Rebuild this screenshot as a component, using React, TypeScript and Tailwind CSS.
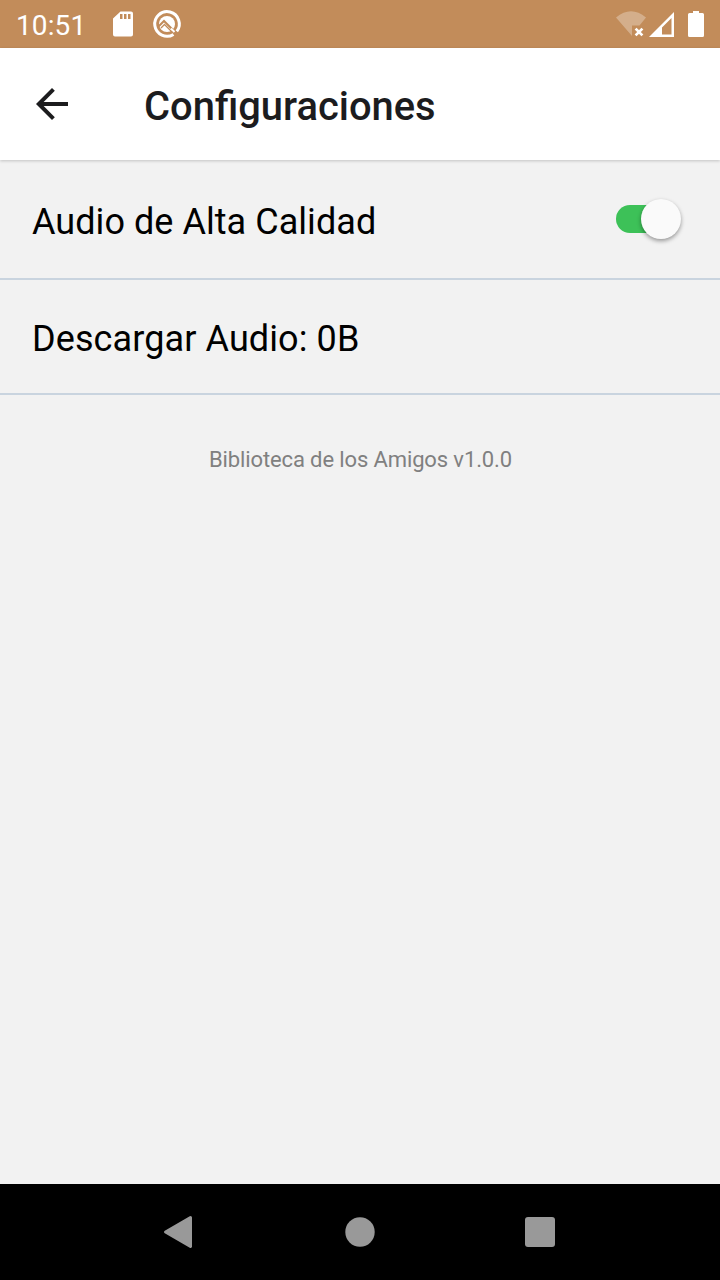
import { useState } from "react";

function StatusBar() {
  return (
    <header className="flex h-12 shrink-0 items-center bg-[#c28c5a] text-white">
      <span className="ml-4 w-[96px] pt-[3px] text-[28px] leading-[46px] tracking-[0.1px]">10:51</span>
      <svg className="h-12 w-6" viewBox="0 0 24 48" fill="#fff">
        <path fillRule="evenodd" d="M8.500 11.500H19a2 2 0 0 1 2 2v21a2 2 0 0 1-2 2H3a2 2 0 0 1-2-2V18.500zM8 14v5h2.500v-5zM12 14v5h2.500v-5zM16 14v5h2.500v-5z" />
      </svg>
      <svg className="ml-4 h-12 w-8" viewBox="152 0 32 48" fill="none" stroke="#fff">
        <path d="M173.500 34.400A12.300 12.300 0 1 1 176.800 31.400" strokeWidth="3" />
        <circle cx="167" cy="24" r="8" fill="#fff" stroke="none" />
        <path d="M158.500 26.500 164 21 176.500 33.500" stroke="#c28c5a" strokeWidth="2" />
        <path d="M161 28 164.500 24.500 171.500 31.500" stroke="#c28c5a" strokeWidth="1.300" />
        <path d="m171 28.500 3.500 3.500" strokeWidth="2" />
      </svg>
      <svg className="ml-auto h-12 w-[108px]" viewBox="612 0 108 48" fill="none">
        <path d="M616 17.500Q631 5 646 17.500L639.500 25.500H632V36Z" fill="#fff" fillOpacity=".3" />
        <path d="m635.600 28.600 6.800 6.800m0-6.800-6.800 6.800" stroke="#fff" strokeWidth="2.700" />
        <path fillRule="evenodd" d="M674 12V37H649ZM671.500 18L662 27.500V34.500H671.500Z" fill="#fff" />
        <path d="M693 11h6v2h3.500q1.500 0 1.500 1.500v21q0 1.500-1.500 1.500h-13q-1.500 0-1.500-1.500v-21q0-1.500 1.500-1.500h3.500z" fill="#fff" />
      </svg>
    </header>
  );
}

function AppBar() {
  return (
    <div className="z-10 flex h-28 shrink-0 items-center bg-white pl-7 text-[#1c1c1e] shadow-[0_1px_3px_rgba(0,0,0,0.2)]">
      <button aria-label="Atrás" className="h-12 w-12">
        <svg viewBox="0 0 48 48" fill="currentColor">
          <path d="M40 22H15.660L26.840 10.820L24 8 8 24l16 16 2.820-2.820L15.660 26H40z" />
        </svg>
      </button>
      <h1 className="ml-[68px] pt-[6px] text-[39.900px] font-medium leading-[48px]">Configuraciones</h1>
    </div>
  );
}

function Toggle() {
  const [on, setOn] = useState(true);
  return (
    <button
      role="switch"
      aria-checked={on}
      aria-label="Audio de Alta Calidad"
      onClick={() => setOn(!on)}
      className={`mr-[39px] flex h-7 w-[65px] items-center rounded-full ${on ? "justify-end bg-[linear-gradient(90deg,#3dc158_50px,transparent_50px)]" : "justify-start bg-gray-400"}`}
    >
      <span className="size-10 shrink-0 rounded-full bg-[#fafafa] shadow-[0_2px_4px_rgba(0,0,0,0.38)]" />
    </button>
  );
}

export default function App() {
  return (
    <div className="flex h-[1280px] w-[720px] flex-col overflow-hidden bg-[#f2f2f2] font-['Roboto',sans-serif]">
      <StatusBar />
      <AppBar />
      <main className="flex-1 text-[36px] text-black">
        <div className="flex h-[120px] items-center justify-between border-b-2 border-[#c9d4df] pl-8">
          <span className="pt-[6px] tracking-[0.05px]">Audio de Alta Calidad</span>
          <Toggle />
        </div>
        <div className="flex h-[115px] items-center border-b-2 border-[#c9d4df] pl-8">
          <span className="pt-1 tracking-[0.1px]">Descargar Audio: 0B</span>
        </div>
        <p className="pl-px pt-[49px] text-center text-[22px] leading-8 tracking-[-0.12px] text-[#808080]">Biblioteca de los Amigos v1.0.0</p>
      </main>
      <nav className="flex h-24 shrink-0 items-center justify-center bg-black">
        <svg className="h-24 w-[180px]" viewBox="90 0 180 96">
          <path d="M190.500 33.500 165.500 48l25 14.500z" fill="#999" stroke="#999" strokeWidth="3" strokeLinejoin="round" />
        </svg>
        <svg className="h-24 w-[180px]" viewBox="270 0 180 96">
          <circle cx="360" cy="48" r="14.700" fill="#999" />
        </svg>
        <svg className="h-24 w-[180px]" viewBox="450 0 180 96">
          <rect x="525" y="33" width="30" height="30" rx="3" fill="#999" />
        </svg>
      </nav>
    </div>
  );
}
